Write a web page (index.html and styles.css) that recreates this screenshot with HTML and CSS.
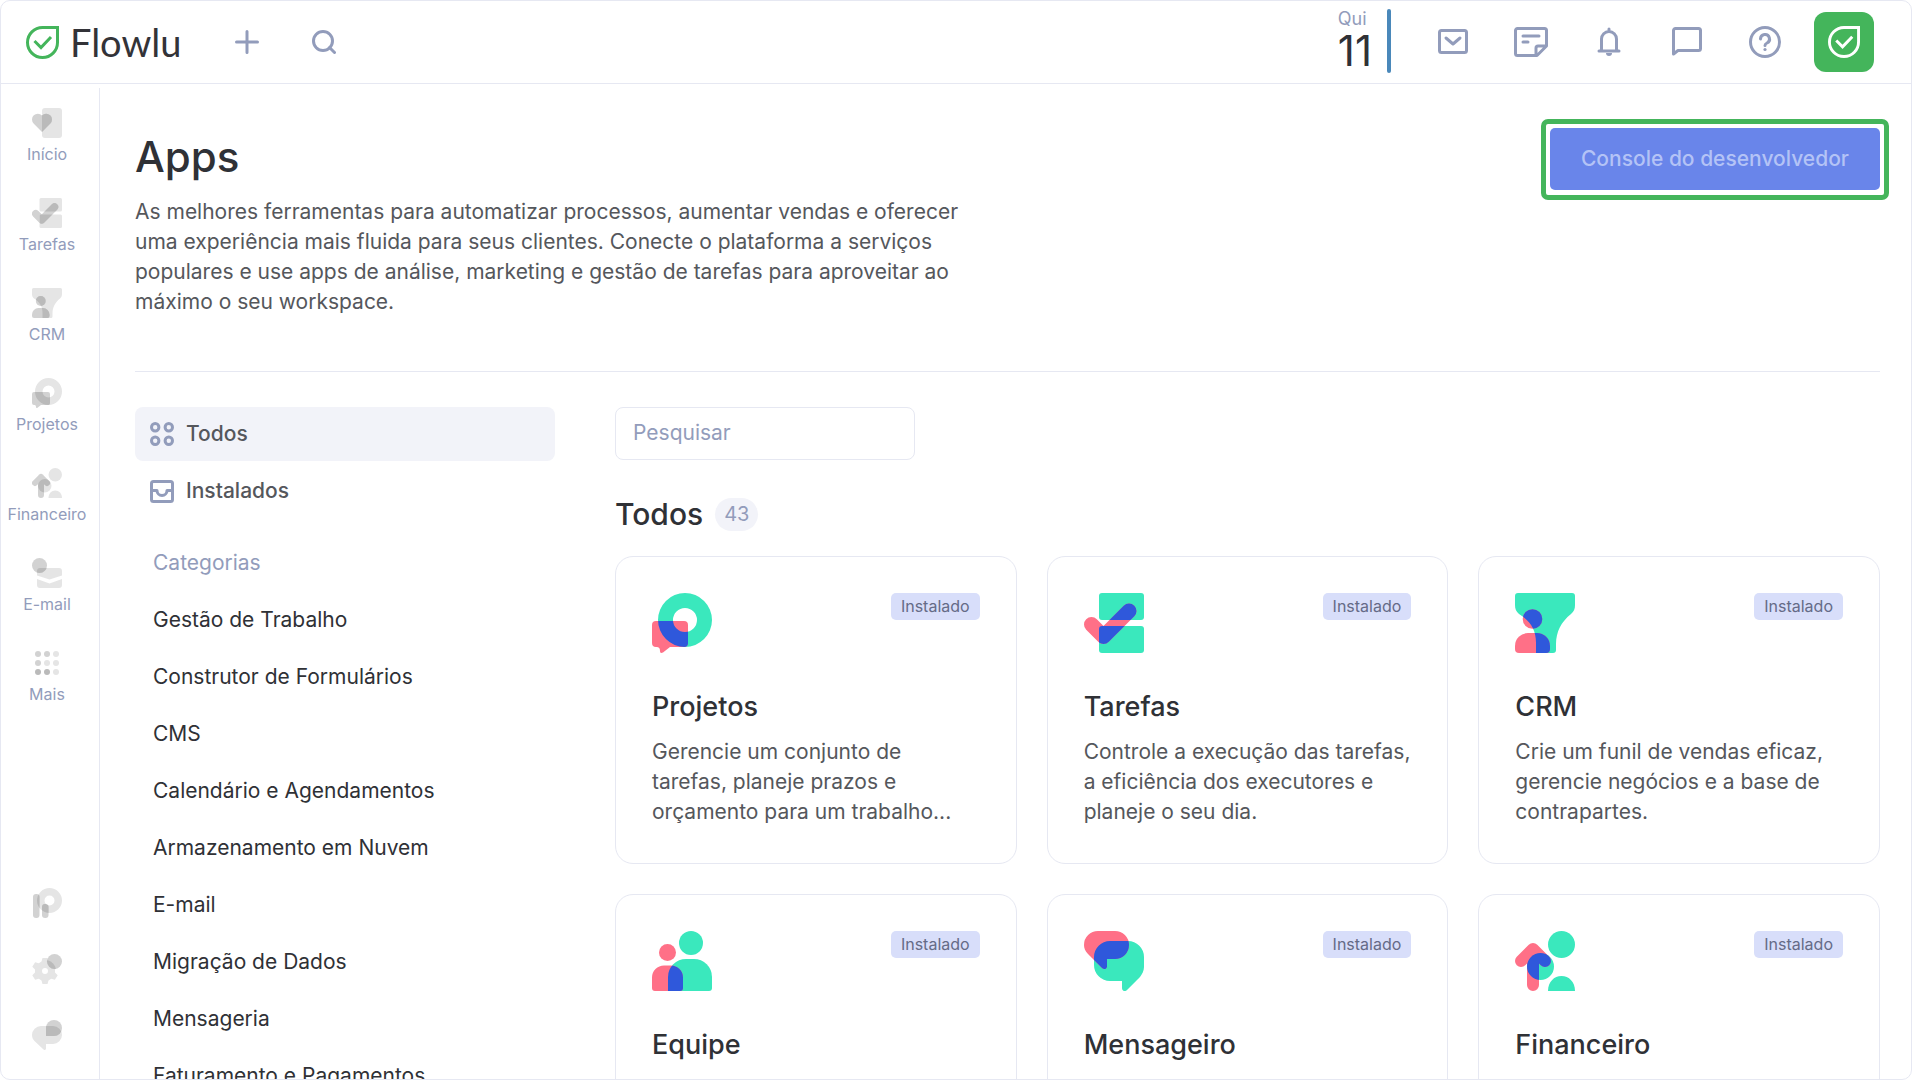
FILE: index.html
```html
<!DOCTYPE html>
<html lang="pt-BR">
<head>
<meta charset="utf-8">
<meta name="viewport" content="width=device-width, initial-scale=1">
<title>Flowlu – Apps</title>
<link rel="stylesheet" href="styles.css">
</head>
<body>
<svg class="sprite" aria-hidden="true">
  <defs>
    <clipPath id="clip-ring"><path clip-rule="evenodd" d="M33 0a27 27 0 1 1 0 54a27 27 0 0 1 0-54zM33 15a12 12 0 1 0 0 24a12 12 0 0 0 0-24z"/></clipPath>
    <clipPath id="clip-tasks"><rect x="15" width="45" height="27" rx="3"/><rect x="15" y="33" width="45" height="27" rx="3"/></clipPath>
    <clipPath id="clip-funnel"><path d="M3 0h54a3 3 0 0 1 3 3v9c0 4-1 6-4 9c-10 8-15 18-15 30v6a3 3 0 0 1-3 3H21V50c0-14-6-22-17-29C1 18 0 16 0 12V3a3 3 0 0 1 3-3z"/></clipPath>
    <clipPath id="clip-team"><path d="M34 28h8a18 18 0 0 1 18 18v11a3 3 0 0 1-3 3H16V46a18 18 0 0 1 18-18z"/></clipPath>
    <clipPath id="clip-chat"><path d="M26 10h18a16 16 0 0 1 16 16v10c0 4-2 7-4 10L43 59c-2 2-5 1-5-2v-7H26a16 16 0 0 1-16-16v-8a16 16 0 0 1 16-16z"/></clipPath>
    <clipPath id="clip-coin"><circle cx="25.500" cy="35.500" r="13.500"/></clipPath>
    <clipPath id="clip-page"><rect x="10" width="20" height="30" rx="3"/></clipPath>
    <clipPath id="clip-mail"><path d="M8 10h19a3 3 0 0 1 3 3v4.500l-12.500 4L5 17.500V13a3 3 0 0 1 3-3z"/></clipPath>
    <clipPath id="clip-portal"><path clip-rule="evenodd" d="M17.500 0a12.500 12.500 0 1 1 0 25a12.500 12.500 0 0 1 0-25zM17.500 7.500a5 5 0 1 0 0 10a5 5 0 0 0 0-10z"/></clipPath>
    <clipPath id="clip-gear"><circle cx="13" cy="17" r="11"/></clipPath>
    <clipPath id="clip-support"><path d="M9 6h12a9 9 0 0 1 0 18h-7v4.500c0 1.500-1.500 2-2.500 1L2.500 21C1 19.500 0 17.500 0 15a9 9 0 0 1 9-9z"/></clipPath>
  </defs>
  <symbol id="leaf" viewBox="0 0 33 33">
    <g fill="none" stroke="currentColor" stroke-width="3"><path d="M16.500 1.500h15v15a15 15 0 1 1-15-15z"/><path d="M8.500 15l6.500 6.500L25 11"/></g>
  </symbol>
  <symbol id="projects" viewBox="0 0 60 60">
    <path class="a" fill-rule="evenodd" d="M33 0a27 27 0 1 1 0 54a27 27 0 0 1 0-54zM33 15a12 12 0 1 0 0 24a12 12 0 0 0 0-24z"/>
    <path class="b" d="M4 28h28a4 4 0 0 1 4 4v18a4 4 0 0 1-4 4H18l-7 5.500c-2 1-3 .5-3-1.500c0-3-1-4-4-4a4 4 0 0 1-4-4V32a4 4 0 0 1 4-4z"/>
    <path class="o" clip-path="url(#clip-ring)" d="M4 28h28a4 4 0 0 1 4 4v18a4 4 0 0 1-4 4H4z"/>
  </symbol>
  <symbol id="tasks" viewBox="0 0 60 60">
    <rect class="a" x="15" width="45" height="27" rx="3"/><rect class="a" x="15" y="33" width="45" height="27" rx="3"/>
    <path class="b line" stroke-width="15" d="M7.500 31.500l12 12L45 18"/>
    <g clip-path="url(#clip-tasks)"><path class="o line" stroke-width="15" d="M7.500 31.500l12 12L45 18"/></g>
  </symbol>
  <symbol id="crm" viewBox="0 0 60 60">
    <path class="a" d="M3 0h54a3 3 0 0 1 3 3v9c0 4-1 6-4 9c-10 8-15 18-15 30v6a3 3 0 0 1-3 3H21V50c0-14-6-22-17-29C1 18 0 16 0 12V3a3 3 0 0 1 3-3z"/>
    <circle class="b" cx="17.500" cy="26" r="9.800"/><path class="b" d="M13 40h9a13 13 0 0 1 13 13v3a4 4 0 0 1-4 4H4a4 4 0 0 1-4-4v-3a13 13 0 0 1 13-13z"/>
    <g class="o" clip-path="url(#clip-funnel)"><circle cx="17.500" cy="26" r="9.800"/><path d="M13 40h9a13 13 0 0 1 13 13v3a4 4 0 0 1-4 4H4a4 4 0 0 1-4-4v-3a13 13 0 0 1 13-13z"/></g>
  </symbol>
  <symbol id="team" viewBox="0 0 60 60">
    <circle class="a" cx="39" cy="12" r="12"/><path class="a" d="M34 28h8a18 18 0 0 1 18 18v11a3 3 0 0 1-3 3H16V46a18 18 0 0 1 18-18z"/>
    <circle class="b" cx="15.500" cy="21.500" r="8.500"/><path class="b" d="M12 34.500h7a12 12 0 0 1 12 12V57a3 3 0 0 1-3 3H3a3 3 0 0 1-3-3V46.500a12 12 0 0 1 12-12z"/>
    <path class="o" clip-path="url(#clip-team)" d="M12 34.500h7a12 12 0 0 1 12 12V57a3 3 0 0 1-3 3H3z"/>
  </symbol>
  <symbol id="messenger" viewBox="0 0 60 60">
    <path class="a" d="M26 10h18a16 16 0 0 1 16 16v10c0 4-2 7-4 10L43 59c-2 2-5 1-5-2v-7H26a16 16 0 0 1-16-16v-8a16 16 0 0 1 16-16z"/>
    <path class="b" d="M14 0h17a14 14 0 0 1 0 28h-8v7.500c0 2.500-3 3.500-5 1.500L4 23C1 20 0 17 0 14A14 14 0 0 1 14 0z"/>
    <path class="o" clip-path="url(#clip-chat)" d="M14 0h17a14 14 0 0 1 0 28h-8v7.500c0 2.500-3 3.500-5 1.500L4 23C1 20 0 17 0 14A14 14 0 0 1 14 0z"/>
  </symbol>
  <symbol id="finance" viewBox="0 0 60 60">
    <circle class="a" cx="46.500" cy="13.500" r="13.500"/><circle class="a" cx="25.500" cy="35.500" r="13.500"/><path class="a" d="M33 60c0-9 6-15 13.500-15S60 51 60 60z"/>
    <path class="b line" stroke-width="12" d="M6 30l12-12l12 12M18 18v36"/>
    <g clip-path="url(#clip-coin)"><path class="o line" stroke-width="12" d="M6 30l12-12l12 12M18 18v36"/></g>
  </symbol>
  <symbol id="home" viewBox="0 0 30 30">
    <rect class="a" x="10" width="20" height="30" rx="3"/>
    <path class="b" d="M10 24L1.600 15.500a5.600 5.600 0 0 1 8.400-8a5.600 5.600 0 0 1 8.400 8z"/>
    <path class="o" clip-path="url(#clip-page)" d="M10 24L1.600 15.500a5.600 5.600 0 0 1 8.400-8a5.600 5.600 0 0 1 8.400 8z"/>
  </symbol>
  <symbol id="email" viewBox="0 0 30 30">
    <path class="a" d="M8 10h19a3 3 0 0 1 3 3v4.500l-12.500 4L5 17.500V13a3 3 0 0 1 3-3zM5 21l12.500 4.500L30 21v6a3 3 0 0 1-3 3H8a3 3 0 0 1-3-3z"/>
    <circle class="b" cx="7.500" cy="7.500" r="7.500"/><circle class="o" clip-path="url(#clip-mail)" cx="7.500" cy="7.500" r="7.500"/>
  </symbol>
  <symbol id="more" viewBox="0 0 30 30">
    <g class="a"><circle cx="24" cy="6" r="3"/><circle cx="24" cy="15" r="3"/><circle cx="24" cy="24" r="3"/><circle cx="15" cy="15" r="3"/></g>
    <g class="b"><circle cx="6" cy="6" r="3"/><circle cx="15" cy="6" r="3"/><circle cx="6" cy="15" r="3"/></g>
    <g class="o"><circle cx="6" cy="24" r="3"/><circle cx="15" cy="24" r="3"/></g>
  </symbol>
  <symbol id="portal" viewBox="0 0 30 30">
    <path class="a" fill-rule="evenodd" d="M17.500 0a12.500 12.500 0 1 1 0 25a12.500 12.500 0 0 1 0-25zM17.500 7.500a5 5 0 1 0 0 10a5 5 0 0 0 0-10z"/>
    <rect class="b" x="1" y="6" width="6.500" height="24" rx="3"/><rect class="b" x="10" y="16" width="6.500" height="14" rx="3"/>
    <g class="o" clip-path="url(#clip-portal)"><rect x="1" y="6" width="6.500" height="24" rx="3"/><rect x="10" y="16" width="6.500" height="14" rx="3"/></g>
  </symbol>
  <symbol id="settings" viewBox="0 0 30 30">
    <path class="a" fill-rule="evenodd" d="M10.500 4h5l1 3.600 2.700 1.600 3.700-1 2.800 4.500-2.700 2.700v3.200l2.700 2.700-2.800 4.500-3.700-1-2.700 1.600-1 3.600h-5l-1-3.600-2.700-1.600-3.700 1-2.800-4.500L3 18.600v-3.200L.3 12.700l2.800-4.500 3.700 1 2.700-1.600zM13 14a3 3 0 1 0 0 6a3 3 0 0 0 0-6z"/>
    <circle class="b" cx="22.500" cy="7.500" r="7.500"/><circle class="o" clip-path="url(#clip-gear)" cx="22.500" cy="7.500" r="7.500"/>
  </symbol>
  <symbol id="support" viewBox="0 0 30 30">
    <path class="a" d="M9 6h12a9 9 0 0 1 0 18h-7v4.500c0 1.500-1.500 2-2.500 1L2.500 21C1 19.500 0 17.500 0 15a9 9 0 0 1 9-9z"/>
    <path class="b" d="M14 16V8a8 8 0 1 1 8 8z"/><path class="o" clip-path="url(#clip-support)" d="M14 16V8a8 8 0 1 1 8 8z"/>
  </symbol>
</svg>

<div class="frame">
  <header class="topbar">
    <a class="brand" href="#"><svg class="brand-mark" aria-hidden="true"><use href="#leaf"/></svg><span>Flowlu</span></a>
    <button class="icon-btn" type="button" aria-label="Adicionar"><svg width="24" height="24" viewBox="0 0 24 24"><path d="M12 1.500v21M1.500 12h21"/></svg></button>
    <button class="icon-btn search-btn" type="button" aria-label="Buscar"><svg width="24" height="24" viewBox="0 0 24 24"><circle cx="11" cy="11" r="9.500"/><path d="M17.500 17.500l5 5"/></svg></button>
    <div class="date"><span class="date-text"><span class="weekday">Qui</span><span class="day">11</span></span><span class="date-bar"></span></div>
    <div class="tools">
      <button class="icon-btn" type="button" aria-label="E-mail"><svg width="30" height="26" viewBox="0 0 30 26"><rect x="1.500" y="1.500" width="27" height="22" rx="2"/><path d="M8 9l7 6 7-6"/></svg></button>
      <button class="icon-btn" type="button" aria-label="Notas"><svg width="34" height="30" viewBox="0 0 34 30"><path d="M3.500 1.500h27a2 2 0 0 1 2 2V19L23 28.500H3.500a2 2 0 0 1-2-2v-23a2 2 0 0 1 2-2zM22 28V21a2 2 0 0 1 2-2h8M9 9h16M9 15h5"/></svg></button>
      <button class="icon-btn" type="button" aria-label="Notificações"><svg width="24" height="30" viewBox="0 0 24 30"><path d="M2 24h20M4.500 24V12a7.500 7.500 0 0 1 15 0v12M12 4V2"/><path class="solid" d="M9 26h6a3 3 0 0 1-6 0z"/></svg></button>
      <button class="icon-btn" type="button" aria-label="Mensagens"><svg width="30" height="30" viewBox="0 0 30 30"><path d="M3.500 1.500h23a2 2 0 0 1 2 2v18a2 2 0 0 1-2 2H6l-4.500 3.500V3.500a2 2 0 0 1 2-2z"/></svg></button>
      <button class="icon-btn" type="button" aria-label="Ajuda"><svg width="32" height="32" viewBox="0 0 32 32"><circle cx="16" cy="16" r="14.500"/><path d="M11.500 13a4.500 4.500 0 1 1 6.500 4c-1.500.7-2 1.200-2 2.500"/><circle class="solid" cx="16" cy="23.500" r="1.600"/></svg></button>
    </div>
    <button class="avatar" type="button" aria-label="Perfil"><svg width="32" height="32"><use href="#leaf"/></svg></button>
  </header>

  <div class="body">
    <nav class="rail" aria-label="Módulos">
      <a class="rail-item" href="#"><svg><use href="#home"/></svg>Início</a>
      <a class="rail-item" href="#"><svg><use href="#tasks"/></svg>Tarefas</a>
      <a class="rail-item" href="#"><svg><use href="#crm"/></svg>CRM</a>
      <a class="rail-item" href="#"><svg><use href="#projects"/></svg>Projetos</a>
      <a class="rail-item" href="#"><svg><use href="#finance"/></svg>Financeiro</a>
      <a class="rail-item" href="#"><svg><use href="#email"/></svg>E-mail</a>
      <a class="rail-item" href="#"><svg><use href="#more"/></svg>Mais</a>
      <div class="rail-foot">
        <a href="#" aria-label="Portal"><svg><use href="#portal"/></svg></a>
        <a href="#" aria-label="Configurações"><svg><use href="#settings"/></svg></a>
        <a href="#" aria-label="Suporte"><svg><use href="#support"/></svg></a>
      </div>
    </nav>

    <main class="main">
      <section class="intro">
        <div class="intro-text">
          <h1>Apps</h1>
          <p>As melhores ferramentas para automatizar processos, aumentar vendas e oferecer uma experiência mais fluida para seus clientes. Conecte o plataforma a serviços populares e use apps de análise, marketing e gestão de tarefas para aproveitar ao máximo o seu workspace.</p>
        </div>
        <div class="highlight"><button class="console-btn" type="button">Console do desenvolvedor</button></div>
      </section>

      <div class="columns">
        <nav class="filters" aria-label="Categorias">
          <a class="filter active" href="#"><svg width="24" height="24" viewBox="0 0 24 24"><circle cx="5.200" cy="5.200" r="3.700"/><circle cx="18.800" cy="5.200" r="3.700"/><circle cx="5.200" cy="18.800" r="3.700"/><circle cx="18.800" cy="18.800" r="3.700"/></svg>Todos</a>
          <a class="filter" href="#"><svg width="24" height="24" viewBox="0 0 24 24"><rect x="1.500" y="2.500" width="21" height="20" rx="2"/><path d="M2 11.500h5a5 5 0 0 0 10 0h5"/></svg>Instalados</a>
          <h2 class="filters-title">Categorias</h2>
          <a class="category" href="#">Gestão de Trabalho</a>
          <a class="category" href="#">Construtor de Formulários</a>
          <a class="category" href="#">CMS</a>
          <a class="category" href="#">Calendário e Agendamentos</a>
          <a class="category" href="#">Armazenamento em Nuvem</a>
          <a class="category" href="#">E-mail</a>
          <a class="category" href="#">Migração de Dados</a>
          <a class="category" href="#">Mensageria</a>
          <a class="category" href="#">Faturamento e Pagamentos</a>
        </nav>

        <section class="catalog">
          <input class="search" type="search" placeholder="Pesquisar" aria-label="Pesquisar">
          <h2 class="catalog-title">Todos <span class="count">43</span></h2>
          <div class="cards">
            <article class="card"><div class="card-top"><svg><use href="#projects"/></svg><span class="tag">Instalado</span></div><h3>Projetos</h3><p>Gerencie um conjunto de tarefas, planeje prazos e orçamento para um trabalho...</p></article>
            <article class="card"><div class="card-top"><svg><use href="#tasks"/></svg><span class="tag">Instalado</span></div><h3>Tarefas</h3><p>Controle a execução das tarefas, a eficiência dos executores e planeje o seu dia.</p></article>
            <article class="card"><div class="card-top"><svg><use href="#crm"/></svg><span class="tag">Instalado</span></div><h3>CRM</h3><p>Crie um funil de vendas eficaz, gerencie negócios e a base de contrapartes.</p></article>
            <article class="card"><div class="card-top"><svg><use href="#team"/></svg><span class="tag">Instalado</span></div><h3>Equipe</h3></article>
            <article class="card"><div class="card-top"><svg><use href="#messenger"/></svg><span class="tag">Instalado</span></div><h3>Mensageiro</h3></article>
            <article class="card"><div class="card-top"><svg><use href="#finance"/></svg><span class="tag">Instalado</span></div><h3>Financeiro</h3></article>
          </div>
        </section>
      </div>
    </main>
  </div>
</div>
</body>
</html>
```
FILE: styles.css
```css
:root {
  --line: #e6e8f2;
  --muted: #929cbb;
  --text: #55575c;
  --dark: #2f3136;
  --green: #44b55b;
  --soft: #f2f3f9;
}

* { box-sizing: border-box; }

body {
  margin: 0;
  background: #fff;
  color: var(--text);
  font: 400 21px/30px Inter, "Liberation Sans", sans-serif;
}

h1, h2, h3, p { margin: 0; font-weight: 500; }
p { font-weight: 400; }
a { color: inherit; text-decoration: none; }
button { border: 0; padding: 0; background: none; font: inherit; cursor: pointer; }

.sprite { position: absolute; width: 0; height: 0; }
.a { fill: var(--a); }
.b { fill: var(--b); }
.o { fill: var(--o); }
.line { fill: none; stroke-linecap: round; stroke-linejoin: round; }
.line.b { stroke: var(--b); }
.line.o { stroke: var(--o); }

.frame {
  display: flex;
  flex-direction: column;
  height: 100vh;
  border: 1px solid var(--line);
  border-radius: 10px;
  overflow: hidden;
}

/* Top bar */
.topbar {
  display: flex;
  align-items: center;
  flex: none;
  height: 83px;
  padding: 0 37px 0 25px;
  border-bottom: 1px solid var(--line);
}
.brand {
  display: flex;
  align-items: center;
  gap: 11px;
  margin-right: 42px;
  color: #333338;
  font: 400 38px/40px Lato, sans-serif;
}
.brand-mark { width: 33px; height: 33px; color: var(--green); }
.icon-btn {
  display: grid;
  place-items: center;
  width: 48px;
  height: 48px;
}
.icon-btn svg, .filter svg {
  fill: none;
  stroke: var(--muted);
  stroke-width: 3;
  stroke-linecap: round;
  stroke-linejoin: round;
}
.icon-btn .solid { fill: var(--muted); stroke: none; }
.search-btn { margin-left: 29px; }
.date { display: flex; align-items: center; gap: 15px; margin-left: auto; padding-bottom: 2px; }
.date-text { display: flex; flex-direction: column; }
.weekday { color: var(--muted); font-size: 18px; line-height: 20px; }
.day { color: var(--dark); font-size: 42px; line-height: 44px; }
.date-bar { width: 4px; height: 64px; border-radius: 2px; background: #4a88ba; }
.tools { display: flex; gap: 30px; margin: 0 25px 0 38px; }
.avatar {
  display: grid;
  place-items: center;
  width: 60px;
  height: 60px;
  border-radius: 12px;
  background: var(--green);
  color: #fff;
}

/* Module rail */
.body { display: flex; flex: 1; min-height: 0; }
.rail {
  --a: #e5e5e5;
  --b: #d2d2d2;
  --o: #bababa;
  display: flex;
  flex-direction: column;
  flex: none;
  gap: 28px;
  width: 99px;
  margin-top: 4px;
  padding: 20px 0 29px;
  border-right: 1px solid var(--line);
  color: var(--muted);
  font-size: 16px;
  line-height: 32px;
}
.rail svg { display: block; width: 30px; height: 30px; }
.rail-item { display: flex; flex-direction: column; align-items: center; height: 62px; padding-right: 6px; }
.rail-foot { display: flex; flex-direction: column; align-items: center; gap: 36px; margin-top: auto; padding-right: 6px; }

/* Page */
.main { flex: 1; min-width: 0; padding: 35px 31px 0 35px; overflow: hidden; }
.intro {
  display: flex;
  justify-content: space-between;
  align-items: flex-start;
  padding-bottom: 54px;
  border-bottom: 1px solid var(--line);
}
.intro-text { max-width: 840px; padding-top: 13px; }
h1 { margin-bottom: 15px; color: var(--dark); font-size: 42px; line-height: 50px; }
.highlight { margin-right: -9px; padding: 4px 4px 5px; border: 5px solid var(--green); border-radius: 7px; }
.console-btn {
  display: block;
  padding: 16px 31px;
  border-radius: 5px;
  background: #6985ea;
  color: #b4c3f6;
  font-weight: 500;
}

.columns { display: grid; grid-template-columns: 420px 1fr; gap: 60px; margin-top: 35px; }
.filters { display: flex; flex-direction: column; gap: 3px; }
.filter {
  display: flex;
  align-items: center;
  gap: 12px;
  padding: 12px 15px;
  border-radius: 8px;
  font-weight: 500;
}
.filter.active { background: var(--soft); }
.filters-title { margin-top: 15px; padding: 12px 18px; color: var(--muted); font-size: 21px; font-weight: 400; }
.category { padding: 12px 18px; color: var(--dark); }

.search {
  display: block;
  width: 300px;
  height: 53px;
  padding: 0 17px 2px;
  border: 1px solid var(--line);
  border-radius: 8px;
  background: #fff;
  font: inherit;
}
.search::placeholder { color: var(--muted); opacity: 1; }
.catalog-title {
  display: flex;
  align-items: center;
  gap: 12px;
  margin: 37px 0 25px;
  color: var(--dark);
  font-size: 30px;
  line-height: 34px;
}
.count {
  padding: 0 9px;
  border-radius: 17px;
  background: var(--soft);
  color: var(--muted);
  font-size: 20px;
  font-weight: 400;
  line-height: 33px;
}
.cards { display: grid; grid-template-columns: repeat(3, 1fr); gap: 30px; }
.card {
  --a: #3ae8bd;
  --b: #ff7087;
  --o: #2f58db;
  min-height: 308px;
  padding: 36px;
  border: 1px solid var(--line);
  border-radius: 18px;
}
.card-top { display: flex; justify-content: space-between; align-items: flex-start; }
.card-top svg { width: 60px; height: 60px; }
.tag {
  padding: 0 10px;
  border-radius: 5px;
  background: #d8defa;
  color: #656b87;
  font-size: 16px;
  line-height: 27px;
}
.card h3 { margin: 36px 0 12px; color: var(--dark); font-size: 27px; line-height: 36px; }
```
